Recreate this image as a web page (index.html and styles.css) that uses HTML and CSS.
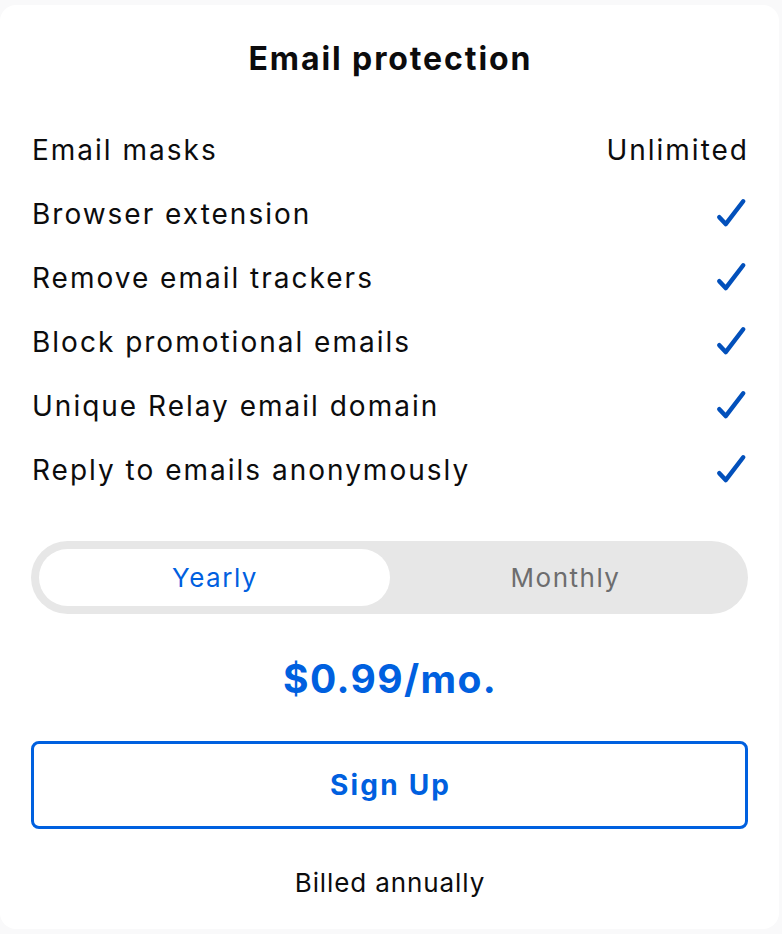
FILE: index.html
```html
<!DOCTYPE html>
<html lang="en">
<head>
<meta charset="utf-8">
<title>Email protection</title>
<link rel="stylesheet" href="styles.css">
</head>
<body>
<div class="card">
  <h2 class="title">Email protection</h2>
  <ul class="features">
    <li class="row"><span>Email masks</span><span class="val">Unlimited</span></li>
    <li class="row"><span>Browser extension</span><svg class="check" viewBox="0 0 32 32"><path d="M5 19 L11 25.5 L27.5 4" /></svg></li>
    <li class="row"><span>Remove email trackers</span><svg class="check" viewBox="0 0 32 32"><path d="M5 19 L11 25.5 L27.5 4" /></svg></li>
    <li class="row"><span>Block promotional emails</span><svg class="check" viewBox="0 0 32 32"><path d="M5 19 L11 25.5 L27.5 4" /></svg></li>
    <li class="row"><span>Unique Relay email domain</span><svg class="check" viewBox="0 0 32 32"><path d="M5 19 L11 25.5 L27.5 4" /></svg></li>
    <li class="row"><span>Reply to emails anonymously</span><svg class="check" viewBox="0 0 32 32"><path d="M5 19 L11 25.5 L27.5 4" /></svg></li>
  </ul>
  <div class="toggle">
    <button class="opt active">Yearly</button>
    <button class="opt">Monthly</button>
  </div>
  <p class="price">$0.99/mo.</p>
  <button class="signup">Sign Up</button>
  <p class="billed">Billed annually</p>
</div>
</body>
</html>
```
FILE: styles.css
```css
* { box-sizing: border-box; }
html, body { margin: 0; padding: 0; }
body {
  background: #f9f9fa;
  font-family: Inter, "Noto Sans", sans-serif;
  color: #0c0c0d;
  padding-top: 5px;
}
.card {
  width: 779px;
  height: 924px;
  background: #fff;
  border-radius: 16px;
  padding: 34px 32px 0 32px;
  display: flex;
  flex-direction: column;
}
.title {
  margin: 0;
  text-align: center;
  font-size: 32px;
  line-height: 40px;
  font-weight: 700;
  letter-spacing: 1.9px;
  text-indent: 1.9px;
  flex-shrink: 0;
}
.features {
  list-style: none;
  margin: 39px 0 0 0;
  padding: 0;
  flex-shrink: 0;
}
.row {
  height: 64px;
  display: flex;
  align-items: center;
  justify-content: space-between;
  font-size: 28px;
  line-height: 40px;
  letter-spacing: 2px;
}
.val {
  margin-right: -2px;
}
.check {
  width: 34px;
  height: 34px;
  fill: none;
  stroke: #0250bb;
  stroke-width: 4.2;
  stroke-linecap: round;
  stroke-linejoin: round;
  margin-right: -1px;
}
.toggle {
  margin: 39px -1px 0 -1px;
  background: #e7e7e7;
  border-radius: 37px;
  padding: 8px;
  display: grid;
  grid-template-columns: 1fr 1fr;
  flex-shrink: 0;
}
.opt {
  height: 57px;
  border: 0;
  border-radius: 29px;
  background: transparent;
  font-family: inherit;
  font-size: 26px;
  letter-spacing: 1.5px;
  text-indent: 1.5px;
  color: #6d6d6e;
  padding: 0;
}
.opt.active {
  background: #fff;
  color: #0060df;
}
.price {
  margin: 41px 0 0 0;
  text-align: center;
  font-size: 39px;
  line-height: 48px;
  font-weight: 700;
  letter-spacing: 1.4px;
  text-indent: 1.4px;
  color: #0060df;
  flex-shrink: 0;
}
.signup {
  margin: 38px -1px 0 -1px;
  height: 88px;
  flex-shrink: 0;
  border: 3px solid #0060df;
  border-radius: 8px;
  background: #fff;
  font-family: inherit;
  font-size: 28px;
  font-weight: 700;
  letter-spacing: 2.2px;
  text-indent: 2.2px;
  color: #0060df;
}
.billed {
  margin: 36px 0 0 0;
  text-align: center;
  font-size: 26px;
  line-height: 36px;
  letter-spacing: 0.9px;
  text-indent: 0.9px;
  flex-shrink: 0;
}
```
